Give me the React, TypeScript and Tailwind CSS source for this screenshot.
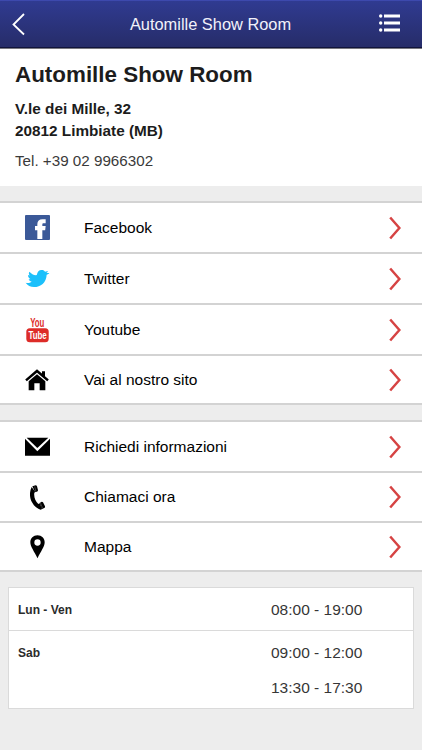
import type { ReactNode } from "react";

interface LinkItem {
  label: string;
  icon: ReactNode;
  height: string;
}

interface OpeningHours {
  day: string;
  slots: string[];
}

function FacebookIcon() {
  return (
    <svg width="25" height="25" viewBox="0 0 75 75">
      <rect width="75" height="75" rx="3" fill="#3b5998" />
      <path
        d="M37 72V46h-7V33h7v-6c0-9 6-14 15-14h10V25h-6c-3 0-4 1.500-4 4v4h10l-1.500 13H52v26z"
        fill="#fff"
      />
    </svg>
  );
}

function TwitterIcon() {
  return (
    <svg width="25" height="19" viewBox="75 208 75 57">
      <path
        d="M77 249c6 2 13 1 18-3-5-1-8-4-9-8 2 1 4 1 5 0-5-3-7-7-7-12 2 1 4 2 5 1-3-3-3-7-1-11 6 6 12 10 20 11 2 0 3-1 3-3 1-8 7-14 15-13 4 0 7 2 9 5l9-2c-1 3-3 5-5 6l9 0c-2 3-5 4-8 5-1 24-18 37-38 37-10 0-20-5-25-13z"
        fill="#1cc0fb"
      />
    </svg>
  );
}

function YoutubeIcon() {
  return (
    <svg width="25" height="30" viewBox="-1 -2 25 30" className="overflow-visible">
      <text
        x="4.200"
        y="9.800"
        fontFamily="Liberation Sans"
        fontWeight="700"
        fontSize="12"
        textLength="14.200"
        lengthAdjust="spacingAndGlyphs"
        fill="#dd2c28"
      >
        You
      </text>
      <rect x="0.300" y="11.200" width="22.400" height="14" rx="3.500" fill="#dd2c28" />
      <text
        x="2.400"
        y="22.400"
        fontFamily="Liberation Sans"
        fontWeight="700"
        fontSize="11.500"
        textLength="18.400"
        lengthAdjust="spacingAndGlyphs"
        fill="#fff"
      >
        Tube
      </text>
    </svg>
  );
}

function HomeIcon() {
  return (
    <svg width="24" height="22" viewBox="0 0 72 66">
      <path d="M3 34 36 6 69 34" fill="none" stroke="#000" strokeWidth="7.500" />
      <path d="M51 7h9v21l-9-8z" />
      <path d="M11 37 36 16 61 37V64H44V43H28V64H11z" />
    </svg>
  );
}

function MailIcon() {
  return (
    <svg width="25" height="19" viewBox="0 0 75 57">
      <path d="M0 5 37 43 75 5V56H0z" />
      <path d="M5 2H70L37 33z" />
    </svg>
  );
}

function PhoneIcon() {
  return (
    <svg width="15" height="25" viewBox="0 0 45 75">
      <path d="M5 6C-2 20-2 37 6 52c7 13 17 20 26 22l4-2-7-17-4 2C16 50 11 36 13 23l3-2z" />
      <path d="M7 4l10-3c2 0 3 1 4 3l3 12c0 2-1 3-3 4l-6 1z" />
      <path d="M29 54l5-3c2-1 3-1 5 1l6 12c1 2 0 3-1 4l-9 5z" />
      <path d="M14 4l4 16M31 53l7 17" stroke="#777" strokeWidth="1.500" />
    </svg>
  );
}

function PinIcon() {
  return (
    <svg width="15" height="24" viewBox="0 0 45 72">
      <path
        fillRule="evenodd"
        d="M22.500 1C10 1 1 10 1 22c0 13 12 28 21.500 48C32 50 44 35 44 22 44 10 35 1 22.500 1zm0 12a9.500 9.500 0 1 1 0 19 9.500 9.500 0 0 1 0-19z"
      />
    </svg>
  );
}

function Chevron() {
  return (
    <svg width="12" height="24" viewBox="0 0 12 24" className="mr-[21px]">
      <path d="M1.200 1.500 10.400 12 1.200 22.500" fill="none" stroke="#d64343" strokeWidth="2.500" />
    </svg>
  );
}

const socialLinks: LinkItem[] = [
  { label: "Facebook", icon: <FacebookIcon />, height: "h-[51px]" },
  { label: "Twitter", icon: <TwitterIcon />, height: "h-[51px]" },
  { label: "Youtube", icon: <YoutubeIcon />, height: "h-[51px]" },
  { label: "Vai al nostro sito", icon: <HomeIcon />, height: "h-[49px]" },
];

const contactLinks: LinkItem[] = [
  { label: "Richiedi informazioni", icon: <MailIcon />, height: "h-[51px]" },
  { label: "Chiamaci ora", icon: <PhoneIcon />, height: "h-[50px]" },
  { label: "Mappa", icon: <PinIcon />, height: "h-[49px]" },
];

const hours: OpeningHours[] = [
  { day: "Lun - Ven", slots: ["08:00 - 19:00"] },
  { day: "Sab", slots: ["09:00 - 12:00", "13:30 - 17:30"] },
];

function LinkList({ items }: { items: LinkItem[] }) {
  return (
    <ul className="border-t-2 border-[#d3d3d3] bg-white">
      {items.map((item) => (
        <li
          key={item.label}
          className={`flex items-center border-b-2 border-[#d3d3d3] ${item.height}`}
        >
          <span className="flex w-[74px] justify-center">{item.icon}</span>
          <span className="ml-2.5 flex-1 text-[15.5px] text-black">{item.label}</span>
          <Chevron />
        </li>
      ))}
    </ul>
  );
}

export default function App() {
  return (
    <div className="flex h-[750px] w-[422px] flex-col overflow-hidden bg-[#ededed] font-['Liberation_Sans',Arial,sans-serif] text-[#1c1c1c]">
      <header className="flex h-[49px] items-center justify-between border-b border-[#77777f] bg-linear-to-b from-[#303b92] to-[#262c68] pr-[22px] pl-3 shadow-[inset_0_1px_0_#3d49ad,inset_0_-1px_0_#11143c]">
        <svg width="30" height="24" viewBox="0 0 30 24">
          <path d="M12 2 1.500 12.500 12 22.500" fill="none" stroke="#fff" strokeWidth="1.800" />
        </svg>
        <h1 className="text-[16.4px] text-[#f1f1fa]">Automille Show Room</h1>
        <svg width="21" height="18" viewBox="0 0 21 18" fill="#fff" className="mb-0.5">
          <circle cx="1.700" cy="2" r="1.700" />
          <circle cx="1.700" cy="9" r="1.700" />
          <circle cx="1.700" cy="16" r="1.700" />
          <path d="M5 .500H21v3H5zM5 7.500H21v3H5zM5 14.500H21v3H5z" />
        </svg>
      </header>

      <section className="h-[137px] bg-white px-[15px] pt-3">
        <h2 className="text-[22.4px] leading-7 font-bold">Automille Show Room</h2>
        <p className="mt-[9px] text-[15.3px] leading-[22px] font-bold">
          V.le dei Mille, 32
          <br />
          20812 Limbiate (MB)
        </p>
        <p className="mt-2 text-[15.2px] leading-[22px] text-[#3a3a3a]">Tel. +39 02 9966302</p>
      </section>

      <main className="pt-[15px]">
        <LinkList items={socialLinks} />
        <div className="h-[15px]" />
        <LinkList items={contactLinks} />

        <dl className="mx-2 mt-[15px] divide-y divide-[#dadada] border border-[#dadada] bg-white">
          {hours.map((row) => (
            <div key={row.day} className="flex items-start pt-[5px] pb-[3px]">
              <dt className="w-[262px] pl-[9px] text-xs leading-[34px] font-bold text-[#2b2b2b]">
                {row.day}
              </dt>
              <dd className="space-y-px text-[15.5px] leading-[34px] text-[#363636]">
                {row.slots.map((slot) => (
                  <div key={slot}>{slot}</div>
                ))}
              </dd>
            </div>
          ))}
        </dl>
      </main>
    </div>
  );
}
